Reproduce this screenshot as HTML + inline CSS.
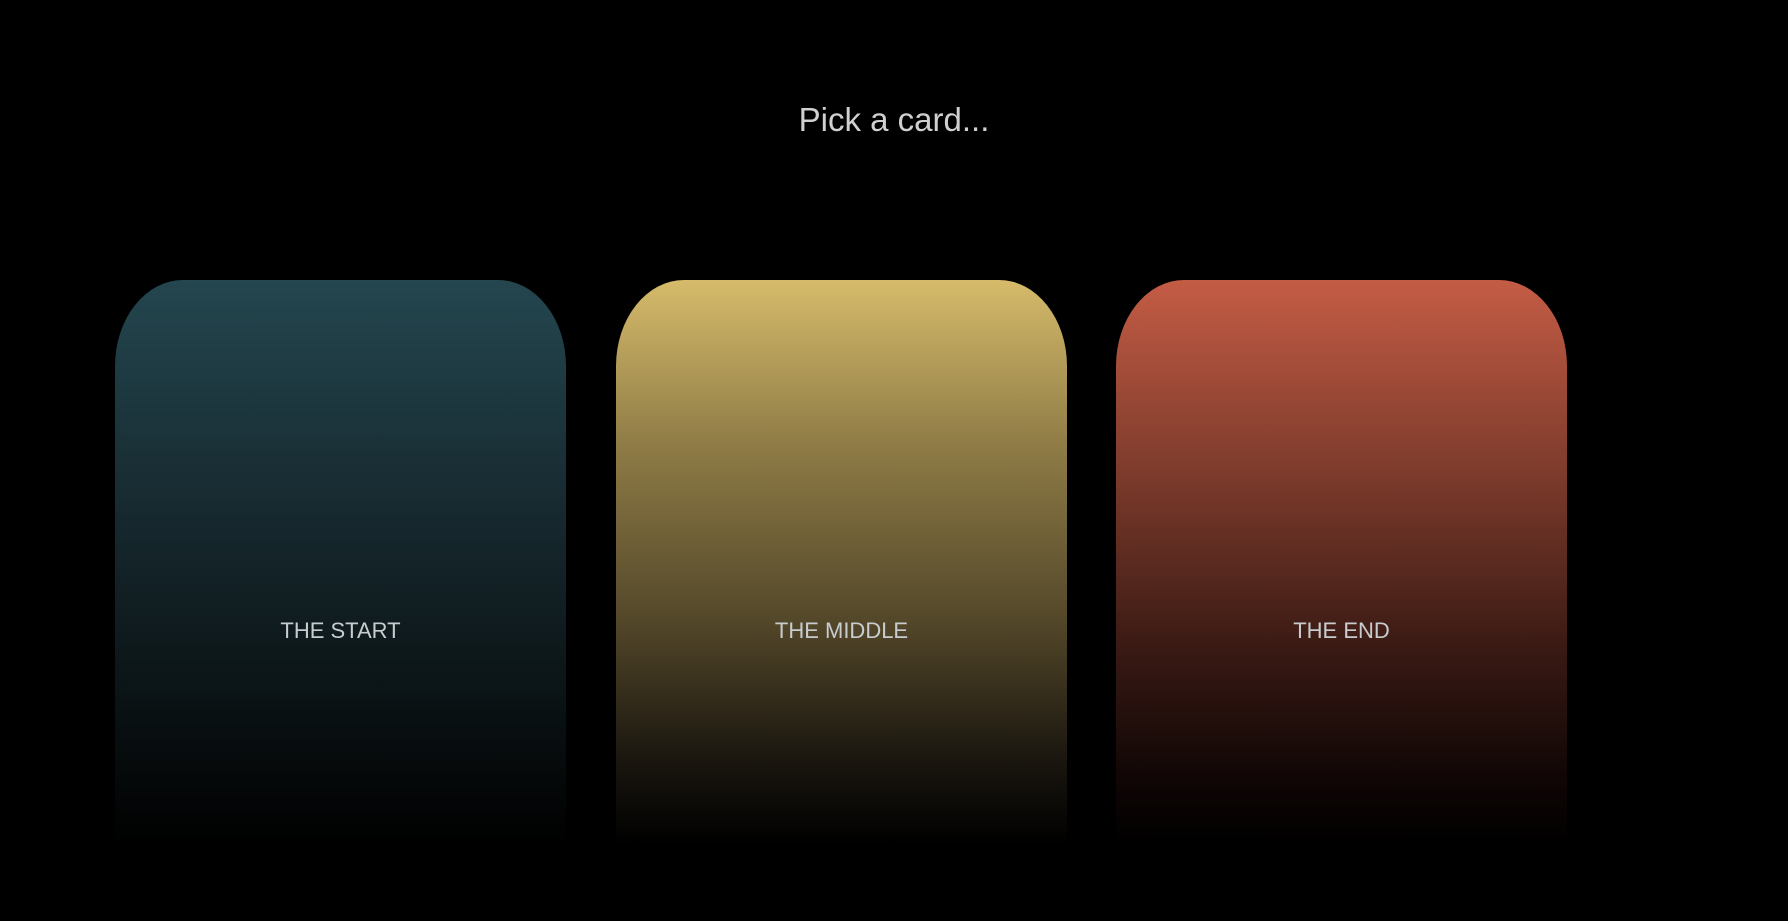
<!DOCTYPE html>
<html><head><style>
html,body{margin:0;width:1788px;height:921px;background:#000;overflow:hidden;font-family:"Liberation Sans",sans-serif;}
h1{position:absolute;top:101px;left:0;width:1788px;text-align:center;margin:0;font-weight:300;font-size:33px;color:#d0d0d0;}
.c{position:absolute;top:280px;width:451px;height:565px;border-radius:68px 68px 0 0/86px 86px 0 0;}
.c span{position:absolute;left:0;width:100%;top:338px;text-align:center;font-size:22px;color:#c8ccce;}
</style></head><body>
<h1>Pick a card...</h1>
<div class="c" style="left:115px;background:linear-gradient(#24464f,#172a30 40%,#0a1214 75%,#000 100%)"><span>THE START</span></div>
<div class="c" style="left:616px;background:linear-gradient(#d6bb6b,#8d7a45 30%,#54482a 60%,#1a160f 85%,#000 100%)"><span>THE MIDDLE</span></div>
<div class="c" style="left:1116px;background:linear-gradient(#c45c45,#7b3a2b 35%,#3a1a14 65%,#100605 88%,#000 100%)"><span>THE END</span></div>
</body></html>
